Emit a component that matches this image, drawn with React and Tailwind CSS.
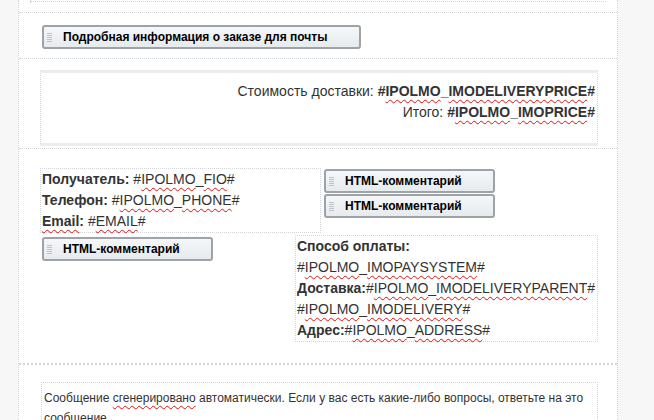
import React from "react";

const W = ({ children }) => (
  <span className="underline decoration-wavy decoration-[#e01010] decoration-1 underline-offset-[3px] [text-decoration-skip-ink:none]">
    {children}
  </span>
);

const Grip = () => (
  <span className="flex flex-col gap-[1px] w-[5px] shrink-0">
    <span className="h-px w-[5px] bg-[#bfc3c7]" />
    <span className="h-px w-[5px] bg-[#bfc3c7]" />
    <span className="h-px w-[5px] bg-[#bfc3c7]" />
    <span className="h-px w-[5px] bg-[#bfc3c7]" />
    <span className="h-px w-[5px] bg-[#bfc3c7]" />
  </span>
);

const Btn = ({ children, w }) => (
  <div
    className={`flex items-center h-[24px] ${w} border-2 border-[#9ea3a8] rounded-[3px] bg-linear-to-b from-[#f5f7f8] to-[#e6ebee] pl-[3px]`}
  >
    <Grip />
    <span className="ml-[11px] text-[12px] font-bold text-black leading-none whitespace-nowrap">
      {children}
    </span>
  </div>
);

export default function App() {
  const dot = "border-[#d2d6da] border-dotted";
  return (
    <div
      className="flex w-[654px] h-[420px] overflow-hidden bg-white text-[#333]"
      style={{ fontFamily: '"Liberation Sans", Arial, sans-serif' }}
    >
      <div className="w-[18px] shrink-0 bg-[#f7f7f7]" />
      <div className={`w-[600px] shrink-0 border-x ${dot} flex flex-col`}>
        {/* section 0 */}
        <div className={`shrink-0 h-[13px] border-b ${dot}`}>
          <div className={`ml-[11px] w-[576px] h-[2px] border-l border-b ${dot}`} />
        </div>
        {/* section 1 */}
        <div className={`shrink-0 pt-[12px] pb-[9px] pl-[23px] border-b ${dot}`}>
          <Btn w="w-[319px]">Подробная информация о заказе для почты</Btn>
        </div>
        {/* section 2 */}
        <div className={`shrink-0 pt-[11px] pb-[2px] pl-[21px] border-b ${dot}`}>
          <div
            className={`w-[558px] border-x ${dot} border-y-[3px] [border-top-style:solid] [border-bottom-style:solid] border-y-[#ececec] pt-[8px] pb-[20px] pr-[2px] text-right text-[14px] leading-[21px]`}
          >
            <div>
              Стоимость доставки:{" "}
              <b>
                #<W>IPOLMO</W>_<W>IMODELIVERYPRICE</W>#
              </b>
            </div>
            <div>
              Итого:{" "}
              <b>
                #<W>IPOLMO</W>_<W>IMOPRICE</W>#
              </b>
            </div>
          </div>
        </div>
        {/* section 3 */}
        <div className={`shrink-0 pt-[19px] pb-[21px] border-b-2 ${dot} text-[14px] leading-[21px]`}>
          <div className="flex items-start">
            <div className={`ml-[21px] w-[281px] h-[65px] border ${dot} pl-px whitespace-nowrap`}>
              <div>
                <b>Получатель:</b> #<W>IPOLMO</W>_<W>FIO</W>#
              </div>
              <div>
                <b>Телефон:</b> #<W>IPOLMO</W>_<W>PHONE</W>#
              </div>
              <div>
                <b>
                  <W>Email</W>:
                </b>{" "}
                #<W>EMAIL</W>#
              </div>
            </div>
            <div className="ml-[3px] mt-[1px] flex flex-col gap-[1px]">
              <Btn w="w-[171px]">HTML-комментарий</Btn>
              <Btn w="w-[171px]">HTML-комментарий</Btn>
            </div>
          </div>
          <div className="flex items-start mt-[2px]">
            <div className="ml-[23px] mt-[2px]">
              <Btn w="w-[171px]">HTML-комментарий</Btn>
            </div>
            <div className={`ml-[82px] w-[303px] border ${dot} pl-px whitespace-nowrap`}>
              <div>
                <b>Способ оплаты:</b>
              </div>
              <div>
                #<W>IPOLMO</W>_<W>IMOPAYSYSTEM</W>#
              </div>
              <div>
                <b>Доставка:</b>#<W>IPOLMO</W>_<W>IMODELIVERYPARENT</W>#
              </div>
              <div>
                #<W>IPOLMO</W>_<W>IMODELIVERY</W>#
              </div>
              <div>
                <b>Адрес:</b>#<W>IPOLMO</W>_<W>ADDRESS</W>#
              </div>
            </div>
          </div>
        </div>
        {/* section 4 */}
        <div className="shrink-0 pt-[17px] pl-[22px]">
          <div className={`w-[557px] border ${dot} pt-[5px] pl-[2px] text-[12px] leading-[20px] whitespace-nowrap`}>
            <div>
              Сообщение <W>сгенерировано</W> автоматически. Если у вас есть какие-либо вопросы, ответьте на это
            </div>
            <div>сообщение.</div>
          </div>
        </div>
      </div>
      <div className="flex-1 bg-[#f7f7f7]" />
    </div>
  );
}
